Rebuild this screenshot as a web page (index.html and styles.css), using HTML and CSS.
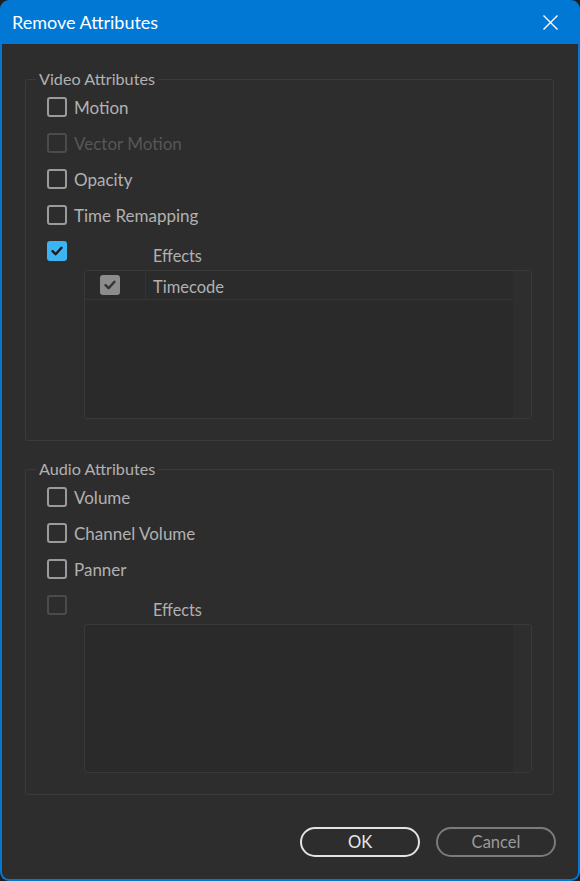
FILE: index.html
```html
<!DOCTYPE html>
<html>
<head>
<meta charset="utf-8">
<link rel="stylesheet" href="styles.css">
</head>
<body>
<div class="window">
  <div class="titlebar">
    <span class="title">Remove Attributes</span>
    <svg class="close" width="17" height="17" viewBox="0 0 17 17"><path d="M1.5 1.5 L15.5 15.5 M15.5 1.5 L1.5 15.5" stroke="#fff" stroke-width="1.4" fill="none"/></svg>
  </div>
  <div class="content">
    <fieldset class="group">
      <legend>Video Attributes</legend>
      <div class="row"><span class="cb"></span><span class="lbl">Motion</span></div>
      <div class="row disabled"><span class="cb"></span><span class="lbl">Vector Motion</span></div>
      <div class="row"><span class="cb"></span><span class="lbl">Opacity</span></div>
      <div class="row"><span class="cb"></span><span class="lbl">Time Remapping</span></div>
      <div class="row effects"><span class="cb checked"><svg width="14" height="14" viewBox="0 0 14 14"><path d="M2.5 7.2 L5.6 10.2 L11.5 3.8" stroke="#1b1b1b" stroke-width="2.4" fill="none" stroke-linecap="round" stroke-linejoin="round"/></svg></span><span class="lbl">Effects</span></div>
      <div class="list">
        <div class="list-main">
          <div class="lrow">
            <div class="lcell-check"><span class="cb gray"><svg width="14" height="14" viewBox="0 0 14 14"><path d="M2.5 7.2 L5.6 10.2 L11.5 3.8" stroke="#333" stroke-width="2.4" fill="none" stroke-linecap="round" stroke-linejoin="round"/></svg></span></div>
            <div class="lcell-name">Timecode</div>
          </div>
        </div>
        <div class="list-scroll"></div>
      </div>
    </fieldset>
    <fieldset class="group audio">
      <legend>Audio Attributes</legend>
      <div class="row"><span class="cb"></span><span class="lbl">Volume</span></div>
      <div class="row"><span class="cb"></span><span class="lbl">Channel Volume</span></div>
      <div class="row"><span class="cb"></span><span class="lbl">Panner</span></div>
      <div class="row effects disabled-box"><span class="cb"></span><span class="lbl">Effects</span></div>
      <div class="list">
        <div class="list-main"></div>
        <div class="list-scroll"></div>
      </div>
    </fieldset>
    <div class="buttons">
      <button class="btn ok">OK</button>
      <button class="btn cancel">Cancel</button>
    </div>
  </div>
</div>
</body>
</html>
```
FILE: styles.css
```css
html, body {
  margin: 0;
  padding: 0;
  background: #1f1f1f;
}
.window {
  width: 580px;
  height: 881px;
  box-sizing: border-box;
  background: #0078d4;
  border-radius: 9px;
  padding: 0 2px 2px 2px;
  display: flex;
  flex-direction: column;
  font-family: Lato, "Liberation Sans", sans-serif;
  overflow: hidden;
}
.titlebar {
  height: 44px;
  flex: none;
  display: flex;
  align-items: center;
  justify-content: space-between;
  padding: 0 19px 0 10px;
}
.title {
  color: #ffffff;
  font-size: 18px;
}
.close {
  display: block;
}
.content {
  flex: 1;
  background: #2d2d2d;
  border-radius: 0 0 7px 7px;
  padding: 25px 23px 0 23px;
  display: flex;
  flex-direction: column;
}
.group {
  margin: 0;
  padding: 0 0 21px 21px;
  border: 1px solid #3b3b3b;
  border-radius: 3px;
  min-width: 0;
  width: 529px;
  box-sizing: border-box;
}
.group.audio {
  margin-top: 18px;
}
.group legend {
  margin-left: -11px;
  padding: 0 3px;
  color: #b1b1b1;
  font-size: 16.2px;
  line-height: 20px;
}
.row {
  height: 36px;
  display: flex;
  align-items: center;
  gap: 7px;
  color: #b1b1b1;
  font-size: 17px;
}
.row.effects {
  height: 37px;
  align-items: flex-start;
}
.row.effects .cb {
  margin-top: 8px;
}
.row.effects .lbl {
  margin-left: 79px;
  margin-top: 13px;
  line-height: 20px;
  font-size: 16.3px;
}
.cb {
  width: 20px;
  height: 20px;
  box-sizing: border-box;
  border: 2px solid #9b9b9b;
  border-radius: 3px;
  flex: none;
  display: flex;
  align-items: center;
  justify-content: center;
}
.cb.checked {
  background: #3eb3f2;
  border-color: #3eb3f2;
}
.row.disabled {
  color: #575757;
}
.row.disabled .cb,
.row.disabled-box .cb {
  border-color: #4b4b4b;
}
.list {
  margin-left: 37px;
  width: 448px;
  height: 149px;
  box-sizing: border-box;
  border: 1px solid #393939;
  border-radius: 3px;
  display: flex;
  background: #2a2a2a;
}
.list-main {
  flex: 1;
}
.list-scroll {
  width: 18px;
  background: #2e2e2e;
  border-radius: 0 3px 3px 0;
}
.lrow {
  height: 28px;
  border-bottom: 1px solid #363636;
  display: flex;
  background: #2b2b2b;
}
.lcell-check {
  width: 61px;
  border-right: 1px solid #333333;
  display: flex;
  align-items: center;
  justify-content: flex-start;
  padding-left: 15px;
  box-sizing: border-box;
}
.cb.gray {
  width: 20px;
  height: 20px;
  background: #8c8c8c;
  border-color: #8c8c8c;
}
.lcell-name {
  padding-left: 7px;
  padding-top: 3px;
  display: flex;
  align-items: center;
  color: #b1b1b1;
  font-size: 16.5px;
}
.buttons {
  display: flex;
  justify-content: flex-end;
  gap: 16px;
  margin-top: 32px;
  margin-right: -1px;
}
.btn {
  width: 120px;
  height: 30px;
  box-sizing: border-box;
  border-radius: 15px;
  background: transparent;
  font-family: Lato, "Liberation Sans", sans-serif;
  font-size: 16.5px;
  padding: 0;
}
.btn.ok {
  border: 2px solid #e3e3e3;
  color: #e8e8e8;
}
.btn.cancel {
  border: 2px solid #7b7b7b;
  color: #9a9a9a;
}
```
